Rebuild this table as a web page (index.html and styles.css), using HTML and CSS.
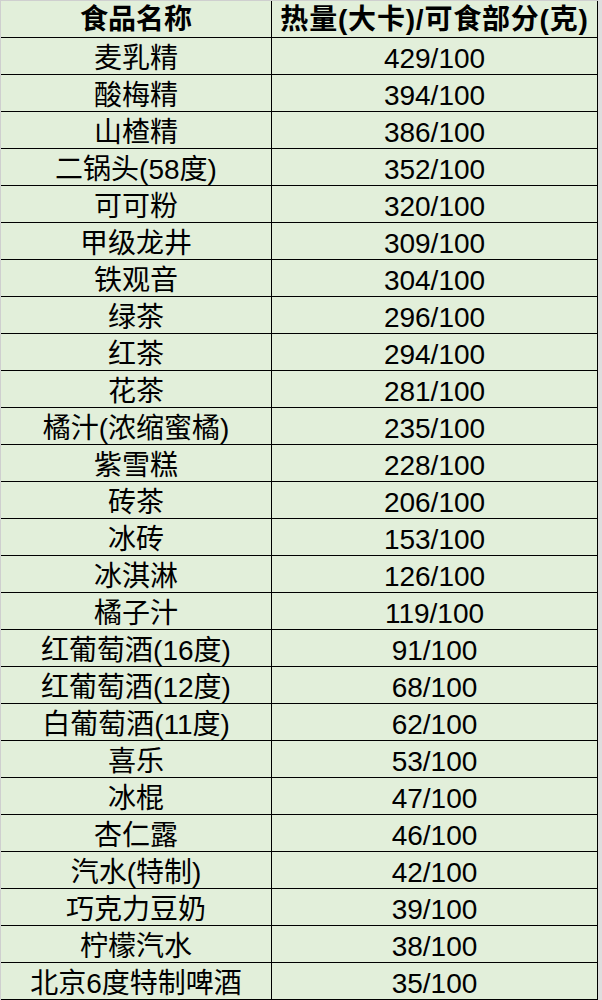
FILE: index.html
```html
<!DOCTYPE html>
<html lang="zh-CN">
<head>
<meta charset="utf-8">
<title>食品热量表</title>
<link rel="stylesheet" href="styles.css">
</head>
<body>
<div class="sheet">
  <div class="cell head">食品名称</div><div class="cell head wide">热量(大卡)/可食部分(克)</div>
  <div class="cell">麦乳精</div><div class="cell">429/100</div>
  <div class="cell">酸梅精</div><div class="cell">394/100</div>
  <div class="cell">山楂精</div><div class="cell">386/100</div>
  <div class="cell">二锅头(58度)</div><div class="cell">352/100</div>
  <div class="cell">可可粉</div><div class="cell">320/100</div>
  <div class="cell">甲级龙井</div><div class="cell">309/100</div>
  <div class="cell">铁观音</div><div class="cell">304/100</div>
  <div class="cell">绿茶</div><div class="cell">296/100</div>
  <div class="cell">红茶</div><div class="cell">294/100</div>
  <div class="cell">花茶</div><div class="cell">281/100</div>
  <div class="cell">橘汁(浓缩蜜橘)</div><div class="cell">235/100</div>
  <div class="cell">紫雪糕</div><div class="cell">228/100</div>
  <div class="cell">砖茶</div><div class="cell">206/100</div>
  <div class="cell">冰砖</div><div class="cell">153/100</div>
  <div class="cell">冰淇淋</div><div class="cell">126/100</div>
  <div class="cell">橘子汁</div><div class="cell">119/100</div>
  <div class="cell">红葡萄酒(16度)</div><div class="cell">91/100</div>
  <div class="cell">红葡萄酒(12度)</div><div class="cell">68/100</div>
  <div class="cell">白葡萄酒(11度)</div><div class="cell">62/100</div>
  <div class="cell">喜乐</div><div class="cell">53/100</div>
  <div class="cell">冰棍</div><div class="cell">47/100</div>
  <div class="cell">杏仁露</div><div class="cell">46/100</div>
  <div class="cell">汽水(特制)</div><div class="cell">42/100</div>
  <div class="cell">巧克力豆奶</div><div class="cell">39/100</div>
  <div class="cell">柠檬汽水</div><div class="cell">38/100</div>
  <div class="cell">北京6度特制啤酒</div><div class="cell">35/100</div>
</div>
</body>
</html>
```

FILE: styles.css
```css
html, body {
  margin: 0;
  padding: 0;
  background: #dedede;
}
.sheet {
  display: grid;
  grid-template-columns: 271px 326px;
  grid-auto-rows: 37px;
  width: 598px;
  box-sizing: border-box;
  border-left: 1px solid #cfcfcf;
  border-top: 1px solid #cfcfcf;
  background: #e2efda;
  font-family: "Liberation Sans", "Noto Sans CJK SC", sans-serif;
  font-size: 28px;
  color: #000;
}
.cell {
  box-sizing: border-box;
  border-right: 1px solid #000;
  border-bottom: 1px solid #000;
  display: flex;
  align-items: center;
  justify-content: center;
  padding-top: 5px;
  white-space: nowrap;
  line-height: 1;
}
.head {
  font-weight: bold;
  padding-top: 2px;
}
.wide {
  letter-spacing: 0.8px;
}
```
